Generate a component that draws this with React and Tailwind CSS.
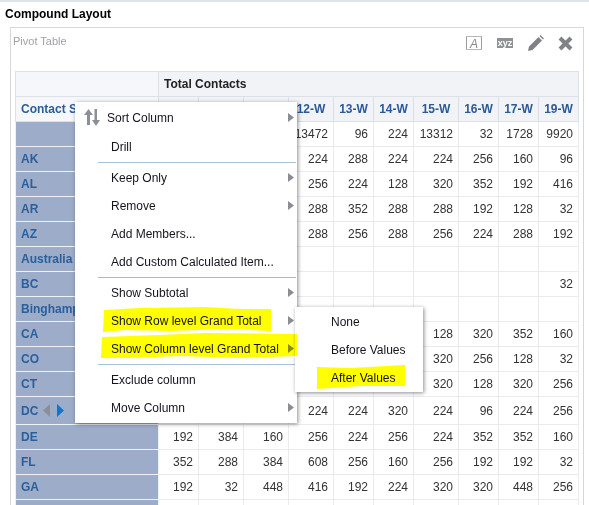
const cols = [143, 40, 45, 45, 45, 40, 40, 45, 40, 40, 40];
const heads = ["", "", "", "12-W", "13-W", "14-W", "15-W", "16-W", "17-W", "19-W"];
const rows = [
  ["", ["", "", "", "13472", "96", "224", "13312", "32", "1728", "9920"]],
  ["AK", ["", "", "", "224", "288", "224", "224", "256", "160", "96"]],
  ["AL", ["", "", "", "256", "224", "128", "320", "352", "192", "416"]],
  ["AR", ["", "", "", "288", "352", "288", "288", "192", "128", "32"]],
  ["AZ", ["", "", "", "288", "256", "288", "256", "224", "288", "192"]],
  ["Australia", ["", "", "", "", "", "", "", "", "", ""]],
  ["BC", ["", "", "", "", "", "", "", "", "", "32"]],
  ["Binghampton", ["", "", "", "", "", "", "", "", "", ""]],
  ["CA", ["", "", "", "", "", "", "128", "320", "352", "160"]],
  ["CO", ["", "", "", "", "", "", "320", "256", "128", "32"]],
  ["CT", ["", "", "", "", "", "", "320", "128", "320", "256"]],
  ["DC", ["", "", "", "224", "224", "320", "224", "96", "224", "256"]],
  ["DE", ["192", "384", "160", "256", "224", "256", "224", "352", "352", "160"]],
  ["FL", ["352", "288", "384", "608", "256", "160", "256", "192", "192", "32"]],
  ["GA", ["192", "32", "448", "416", "192", "224", "320", "320", "448", "256"]],
  ["", ["", "", "", "", "", "", "", "", "", ""]],
];

function Arrow() {
  return (
    <svg className="absolute right-[3px] top-1/2 -mt-[4px]" width="6" height="9" viewBox="0 0 6 9">
      <path d="M0 0 L6 4.5 L0 9 Z" fill="#8a8d92" />
    </svg>
  );
}

function Item({ label, arrow, icon, left = "pl-[36px]" }) {
  return (
    <div className={`relative flex h-[28px] items-center text-[12px] text-[#14141f] ${left}`}>
      {icon}
      <span className="relative top-px">{label}</span>
      {arrow && <Arrow />}
    </div>
  );
}

function Sep({ color }) {
  return <div className={`ml-[23px] mr-px mt-[2px] h-px ${color}`} />;
}

function SortIcon() {
  return (
    <svg className="absolute left-[9px] top-[6px]" width="16" height="17" viewBox="0 0 16 17">
      <path d="M4.5 0 L9 6 L6 6 L6 16 L3 16 L3 6 L0 6 Z" fill="#8a9096" />
      <path d="M10.5 0 L13 0 L13 11 L16 11 L12 17 L8 11 L10.5 11 Z" fill="#8a9096" />
    </svg>
  );
}

export default function App() {
  return (
    <div className="relative h-[505px] w-[589px] overflow-hidden bg-white font-['Liberation_Sans',Arial,sans-serif]">
      <div className="h-[2px] bg-[#dfe4ea]" />
      <div className="pl-[5px] pt-[5px] text-[12px] font-bold leading-[14px] text-black">Compound Layout</div>
      <div className="ml-[10px] mt-[6px] h-[600px] w-[574px] border border-[#d4d7dc] pl-[4px] pt-[7px]">
        <div className="flex h-[36px] items-start">
          <span className="-ml-[2px] text-[11px] leading-[13px] text-[#a0a2a6]">Pivot Table</span>
          <div className="ml-auto flex items-center gap-[15px] pr-[10px]">
            <svg width="16" height="14" viewBox="0 0 16 14">
              <path d="M4 .5 H.5 V13.5 H4 M12 .5 H15.5 V13.5 H12" fill="none" stroke="#9a9da1" />
              <path d="M.5 .5 H15.5 M.5 13.5 H15.5" fill="none" stroke="#b5b7ba" />
              <text x="8" y="11.5" textAnchor="middle" fontSize="12" fontStyle="italic" fill="#85888c" fontFamily="Liberation Sans">A</text>
            </svg>
            <span className="flex h-[10px] w-[16px] items-center justify-center bg-[#8f9194] text-[9px] font-bold leading-[10px] text-white">xyz</span>
            <svg width="16" height="16" viewBox="0 0 16 16">
              <path d="M0 16 L1 11.5 L10.5 2 L14 5.5 L4.5 15 Z M11.5 1 L12.5 0 L16 3.5 L15 4.5 Z" fill="#808285" />
            </svg>
            <svg className="-ml-px" width="15" height="15" viewBox="0 0 15 15">
              <path d="M2 2 L13 13 M13 2 L2 13" stroke="#808285" strokeWidth="4" />
            </svg>
          </div>
        </div>
        <table className="table-fixed border-collapse text-[12px] leading-[14px]" style={{ width: 564 }}>
          <colgroup>
            {cols.map((w, i) => (
              <col key={i} style={{ width: w }} />
            ))}
          </colgroup>
          <tbody>
            <tr className="h-[25px]">
              <td className="border border-[#dce1e8] bg-[#f6f7fa]" />
              <td colSpan={10} className="border border-[#dce1e8] bg-[#f1f3f7] pl-[5px] font-bold text-[#222]">
                Total Contacts
              </td>
            </tr>
            <tr className="h-[25px]">
              <td className="overflow-hidden whitespace-nowrap border border-[#dce1e8] bg-[#f6f7fa] pl-[5px] font-bold text-[#2a6099]">
                Contact S
              </td>
              {heads.map((h, i) => (
                <td key={i} className="border border-[#dce1e8] bg-[#f1f3f7] text-center font-bold text-[#2a5a98]">
                  {h}
                </td>
              ))}
            </tr>
            {rows.map(([name, vals], r) => (
              <tr key={r} className={name === "DC" ? "h-[28px]" : "h-[25px]"}>
                <td className="border border-[#f0f1f4] bg-[#9dadc9] pl-[5px] font-bold text-[#2a5f9e]">
                  <span className="flex items-center">
                    {name}
                    {name === "DC" && (
                      <svg className="ml-[5px]" width="21" height="13" viewBox="0 0 21 13">
                        <path d="M7 0 V13 L0 6.5 Z" fill="#8b8f96" />
                        <path d="M14 0 V13 L21 6.5 Z" fill="#0f75d2" />
                      </svg>
                    )}
                  </span>
                </td>
                {vals.map((v, i) => (
                  <td key={i} className="border border-[#e9ebef] pr-[5px] text-right text-[#333]">
                    {v}
                  </td>
                ))}
              </tr>
            ))}
          </tbody>
        </table>
      </div>

      <div className="absolute left-[75px] top-[102px] w-[222px] bg-white pb-[2px] pt-px shadow-[1px_1px_4px_rgba(0,0,0,0.45)]">
        <div className="pb-px">
          <Item label="Sort Column" arrow icon={<SortIcon />} left="pl-[32px]" />
        </div>
        <Item label="Drill" />
        <Sep color="bg-[#a9c2dc]" />
        <Item label="Keep Only" arrow />
        <Item label="Remove" arrow />
        <Item label="Add Members..." />
        <Item label="Add Custom Calculated Item..." />
        <Sep color="bg-[#adb7cf]" />
        <Item label="Show Subtotal" arrow />
        <Item label="Show Row level Grand Total" arrow />
        <Item label="Show Column level Grand Total" arrow />
        <Sep color="bg-[#a9c2dc]" />
        <Item label="Exclude column" />
        <Item label="Move Column" arrow />
      </div>

      <div className="absolute left-[295px] top-[307px] w-[128px] bg-white pb-px shadow-[1px_1px_4px_rgba(0,0,0,0.45)]">
        <Item label="None" />
        <Item label="Before Values" />
        <Item label="After Values" />
      </div>

      <svg className="pointer-events-none absolute left-0 top-0 mix-blend-multiply" width="589" height="505" viewBox="0 0 589 505">
        <path d="M104 310 L140 308 L205 307 L240 309 L271 309 L271 331 L230 329 L170 331 L125 330 L103 332 Z" fill="#ffff00" />
        <path d="M102 337 L160 335 L205 333 L297 334 L297 356 L240 358 L180 356 L130 358 L101 358 Z" fill="#ffff00" />
        <path d="M317 367 L350 368 L405 365 L405 386 L360 386 L317 389 Z" fill="#ffff00" />
      </svg>
    </div>
  );
}
